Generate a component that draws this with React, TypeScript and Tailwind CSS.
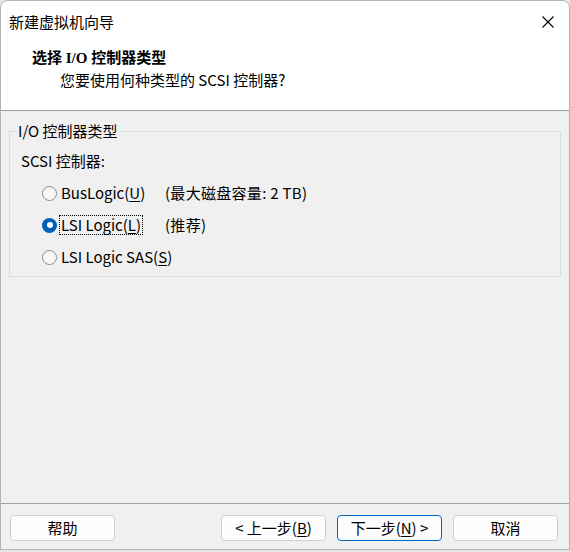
const font = "font-['Noto_Sans_CJK_SC',sans-serif]";

const Key = ({ k }: { k: string }) => <span className="underline underline-offset-2">{k}</span>;

const Radio = ({ checked }: { checked?: boolean }) =>
  checked ? (
    <span className="w-[15px] h-[15px] rounded-full bg-[#005fb8] flex items-center justify-center shrink-0">
      <span className="w-[6px] h-[6px] rounded-full bg-white" />
    </span>
  ) : (
    <span className="w-[15px] h-[15px] rounded-full border border-[#8b8b8b] bg-[#f7f7f7] shrink-0" />
  );

const Button = ({ children, primary }: { children: React.ReactNode; primary?: boolean }) => (
  <button
    className={
      primary
        ? "w-[105px] h-[26px] rounded-[4px] border border-[#0067c0] bg-[#fdfdfd] text-[15px] text-black flex items-center justify-center"
        : "w-[105px] h-[26px] rounded-[4px] border border-[#d0d0d0] bg-[#fdfdfd] text-[15px] text-black flex items-center justify-center"
    }
  >
    {children}
  </button>
);

export default function App() {
  const options = [
    { label: 'BusLogic(', key: 'U', note: '(最大磁盘容量: 2 TB)' },
    { label: 'LSI Logic(', key: 'L', note: '(推荐)', checked: true },
    { label: 'LSI Logic SAS(', key: 'S', note: '' },
  ];

  return (
    <div className={`w-[570px] h-[552px] bg-[#e4e4e4] ${font} text-black`}>
      <div className="w-[570px] h-[550px] border border-[#b4b4b4] rounded-t-lg bg-[#f0f0f0] flex flex-col overflow-hidden">
        {/* title bar */}
        <div className="h-[41px] bg-white flex items-center justify-between pl-[8px] pr-[15px]">
          <span className="text-[15px] leading-[20px]">新建虚拟机向导</span>
          <svg width="12" height="12" viewBox="0 0 12 12">
            <path d="M0.5 0.5 L11.5 11.5 M11.5 0.5 L0.5 11.5" stroke="#000" strokeWidth="1.1" />
          </svg>
        </div>

        {/* header */}
        <div className="bg-white pt-[6px] pb-[20px] border-b border-[#a0a0a0]">
          <div className="pl-[31px] text-[15px] leading-[20px] font-bold font-['Liberation_Serif','Noto_Sans_CJK_SC',serif]">
            选择 I/O 控制器类型
          </div>
          <div className="pl-[59px] mt-[2px] text-[15px] leading-[20px]">您要使用何种类型的 SCSI 控制器?</div>
        </div>

        {/* content */}
        <div className="flex-1 pt-[10px] px-[8px]">
          <fieldset className="border border-[#dcdcdc] pb-[3px]">
            <legend className="ml-[6px] px-[2px] text-[15px] leading-[20px]">I/O 控制器类型</legend>
            <div className="pl-[11px] mt-[10px] text-[15px] leading-[20px]">SCSI 控制器:</div>
            <div className="mt-[6px]">
              {options.map((o) => (
                <div key={o.key} className="h-[32px] flex items-center pl-[32px] text-[15px] whitespace-nowrap">
                  <Radio checked={o.checked} />
                  <span className="min-w-[108px] pl-[4px] flex">
                    <span
                      className={
                        o.checked
                          ? "border border-dotted border-black px-[1px] leading-[18px] -ml-[2px]"
                          : "leading-[20px]"
                      }
                    >
                      {o.label}
                      <Key k={o.key} />)
                    </span>
                  </span>
                  <span className="leading-[20px] tracking-[0.3px]">{o.note}</span>
                </div>
              ))}
            </div>
          </fieldset>
        </div>

        {/* footer */}
        <div className="h-[46px] border-t border-[#a0a0a0] flex items-start pt-[11px] pl-[9px] pr-[11px]">
          <Button>帮助</Button>
          <div className="flex-1" />
          <div className="flex gap-[11px]">
            <Button>
              &lt; 上一步(<Key k="B" />)
            </Button>
            <Button primary>
              下一步(<Key k="N" />) &gt;
            </Button>
            <Button>取消</Button>
          </div>
        </div>
      </div>
    </div>
  );
}
